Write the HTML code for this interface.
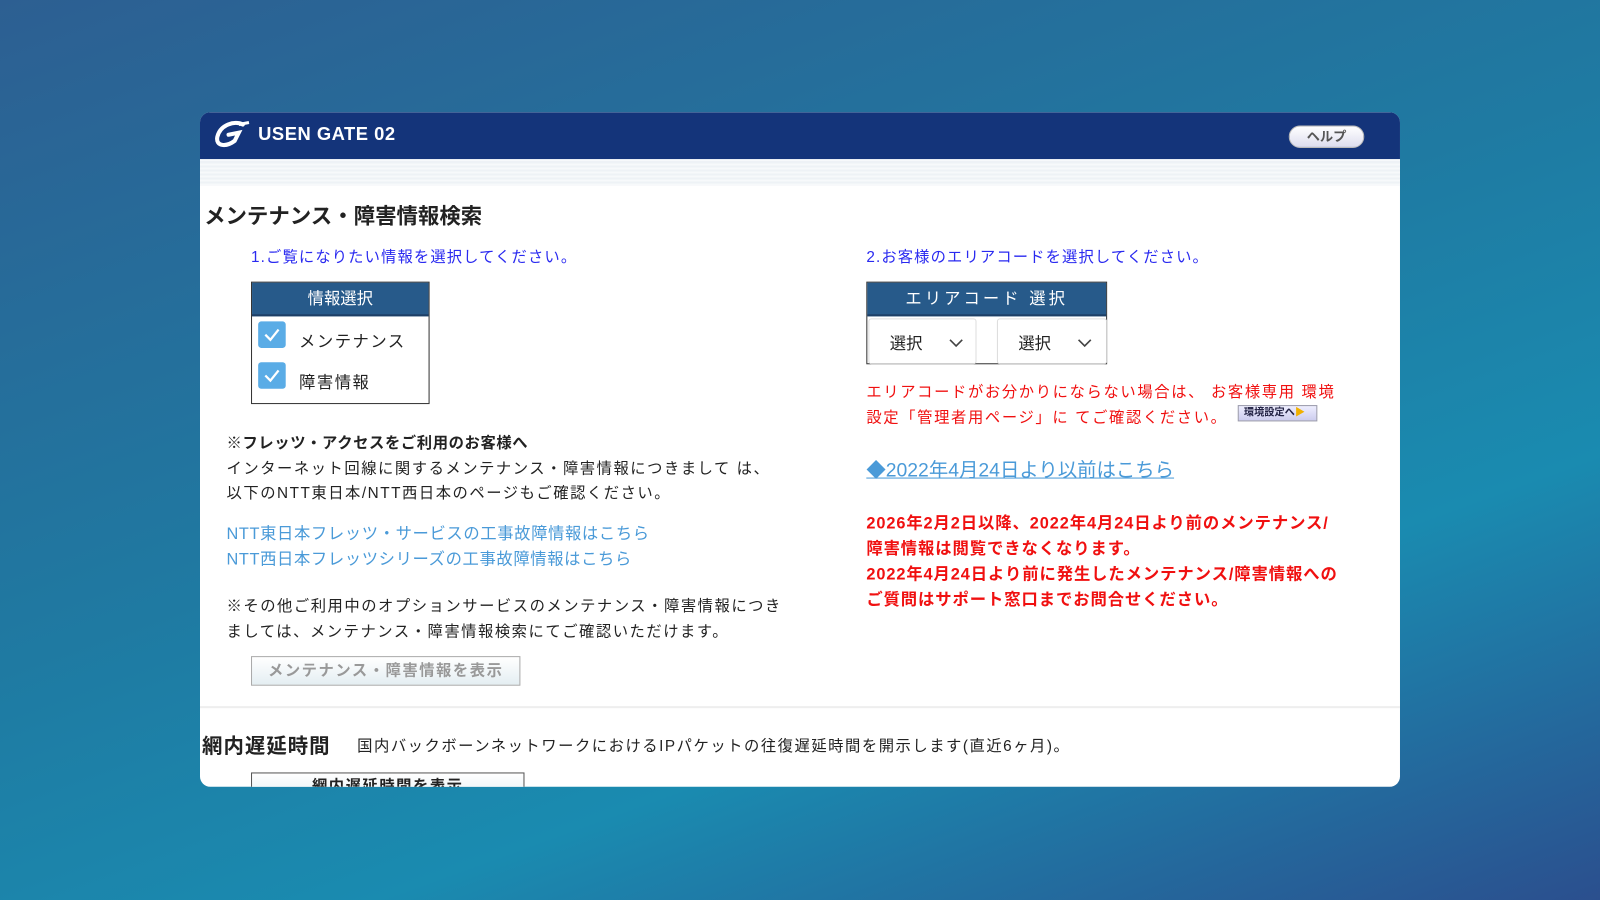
<!DOCTYPE html>
<html><head><meta charset="utf-8"><style>
*{margin:0;padding:0;box-sizing:border-box}
html,body{width:1600px;height:900px;overflow:hidden}
body{background:linear-gradient(160deg,#2d5f92 0%,#1f7aa2 45%,#1a8bb0 70%,#2b4f8e 100%);font-family:"Liberation Sans","Noto Sans CJK JP",sans-serif;}
#w{position:absolute;left:0;top:0;width:1568px;height:882px;transform:scale(1.0204);transform-origin:0 0}
.card{position:absolute;left:196px;top:110px;width:1176px;height:661px;background:#fff;border-radius:10px;overflow:hidden}
.hd{position:absolute;left:0;top:0;width:100%;height:46px;background:#14347a}
.band{position:absolute;left:0;top:46px;width:100%;height:26px;background:repeating-linear-gradient(#f7f9fb 0 2px,#eef2f6 2px 4px)}
.a{position:absolute;white-space:nowrap}
.blue{color:#2a2af0;font-size:15px;letter-spacing:1.1px}
.t{font-size:15px;color:#222;letter-spacing:1.5px}
.lk{font-size:16px;color:#4a9ad8;letter-spacing:0.6px}
.red{color:#f01010;font-size:15px;letter-spacing:1.6px}
.rb{color:#f01010;font-size:16px;font-weight:bold;letter-spacing:0.9px}
.box{position:absolute;border:1px solid #333;background:#fff}
.bh{height:33px;background:#275a8a;color:#fff;text-align:center;line-height:33px;font-size:16px;border-bottom:2px solid #1d3f66}
.cb{position:absolute;width:27px;height:26px;border-radius:3px;background:#5aace6}
.cb svg{position:absolute;left:5px;top:5px}
.sel{position:absolute;top:35px;height:45px;border:1px solid #ddd;border-radius:3px;font-size:16px;color:#222;padding:10px 0 0 20px}
.btn{position:absolute;border:1px solid #aaa;background:linear-gradient(#fff,#e4eef2);color:#999;font-size:15px;text-align:center;letter-spacing:1.5px}
</style></head><body><div id="w">
<div class="card">
 <div class="hd">
  <svg class="a" style="left:12px;top:6px" width="40" height="34" viewBox="0 0 40 34"><path d="M30 6 C22 2 8 6 5 18 C3 28 14 28 22 22 L26 14 L16 16" fill="none" stroke="#fff" stroke-width="4" stroke-linecap="round"/><path d="M26 6 L36 4" stroke="#fff" stroke-width="3"/></svg>
  <div class="a" style="left:57px;top:11px;color:#fff;font-weight:bold;font-size:18px;letter-spacing:0.5px">USEN GATE 02</div>
  <div class="a" style="left:1067px;top:13px;width:74px;height:22px;border-radius:11px;background:linear-gradient(#fff,#dde);border:1px solid #bbb;color:#555;font-size:13px;text-align:center;line-height:20px;font-weight:bold">ヘルプ</div>
 </div>
 <div class="band"></div>
 <div class="a" style="left:4px;top:86px;font-size:21px;font-weight:bold;color:#222">メンテナンス・障害情報検索</div>
 <div class="a blue" style="left:50px;top:131px">1.ご覧になりたい情報を選択してください。</div>
 <div class="box" style="left:50px;top:166px;width:175px;height:120px">
  <div class="bh">情報選択</div>
  <div class="cb" style="left:6px;top:38px"><svg width="17" height="16"><path d="M2 8 L7 13 L15 3" fill="none" stroke="#fff" stroke-width="2.2"/></svg></div>
  <div class="a t" style="left:46px;top:44px;font-size:16px">メンテナンス</div>
  <div class="cb" style="left:6px;top:78px"><svg width="17" height="16"><path d="M2 8 L7 13 L15 3" fill="none" stroke="#fff" stroke-width="2.2"/></svg></div>
  <div class="a t" style="left:46px;top:84px;font-size:16px">障害情報</div>
 </div>
 <div class="a t" style="left:26px;top:313px;font-weight:bold;letter-spacing:0.6px">※フレッツ・アクセスをご利用のお客様へ</div>
 <div class="a t" style="left:26px;top:338px">インターネット回線に関するメンテナンス・障害情報につきまして は、</div>
 <div class="a t" style="left:26px;top:362px">以下のNTT東日本/NTT西日本のページもご確認ください。</div>
 <div class="a lk" style="left:26px;top:399px">NTT東日本フレッツ・サービスの工事故障情報はこちら</div>
 <div class="a lk" style="left:26px;top:424px">NTT西日本フレッツシリーズの工事故障情報はこちら</div>
 <div class="a t" style="left:26px;top:473px">※その他ご利用中のオプションサービスのメンテナンス・障害情報につき</div>
 <div class="a t" style="left:26px;top:498px">ましては、メンテナンス・障害情報検索にてご確認いただけます。</div>
 <div class="btn" style="left:50px;top:533px;width:264px;height:29px;line-height:27px;font-weight:bold">メンテナンス・障害情報を表示</div>
 <div class="a" style="left:0;top:582px;width:100%;height:2px;background:#eee"></div>
 <div class="a" style="left:2px;top:605px;font-size:20px;font-weight:bold;color:#222;letter-spacing:1px">網内遅延時間</div>
 <div class="a t" style="left:154px;top:610px">国内バックボーンネットワークにおけるIPパケットの往復遅延時間を開示します(直近6ヶ月)。</div>
 <div class="btn" style="left:50px;top:647px;width:268px;height:30px;line-height:26px;color:#222;font-weight:bold;border-color:#555">網内遅延時間を表示</div>

 <div class="a blue" style="left:653px;top:131px">2.お客様のエリアコードを選択してください。</div>
 <div class="box" style="left:653px;top:166px;width:236px;height:81px">
  <div class="bh" style="letter-spacing:3px">エリアコード 選択</div>
  <div class="sel" style="left:1px;width:106px">選択<svg class="a" style="left:78px;top:19px" width="14" height="9"><path d="M1 1 L7 7 L13 1" fill="none" stroke="#444" stroke-width="1.6"/></svg></div>
  <div class="sel" style="left:127px;width:108px">選択<svg class="a" style="left:78px;top:19px" width="14" height="9"><path d="M1 1 L7 7 L13 1" fill="none" stroke="#444" stroke-width="1.6"/></svg></div>
 </div>
 <div class="a red" style="left:653px;top:263px">エリアコードがお分かりにならない場合は、 お客様専用 環境</div>
 <div class="a red" style="left:653px;top:288px">設定「管理者用ページ」に てご確認ください。</div>
 <div class="a" style="left:1017px;top:287px;width:78px;height:16px;background:linear-gradient(#eef,#cce);border:1px solid #99a;font-size:10px;color:#224;font-weight:bold;padding-left:5px;line-height:14px">環境設定へ<span style="color:#f0b000">▶</span></div>
 <div class="a" style="left:653px;top:336px;font-size:19px;color:#4a9ad8;text-decoration:underline">◆2022年4月24日より以前はこちら</div>
 <div class="a rb" style="left:653px;top:389px">2026年2月2日以降、2022年4月24日より前のメンテナンス/</div>
 <div class="a rb" style="left:653px;top:414px">障害情報は閲覧できなくなります。</div>
 <div class="a rb" style="left:653px;top:439px">2022年4月24日より前に発生したメンテナンス/障害情報への</div>
 <div class="a rb" style="left:653px;top:464px">ご質問はサポート窓口までお問合せください。</div>
</div>
</div></body></html>
